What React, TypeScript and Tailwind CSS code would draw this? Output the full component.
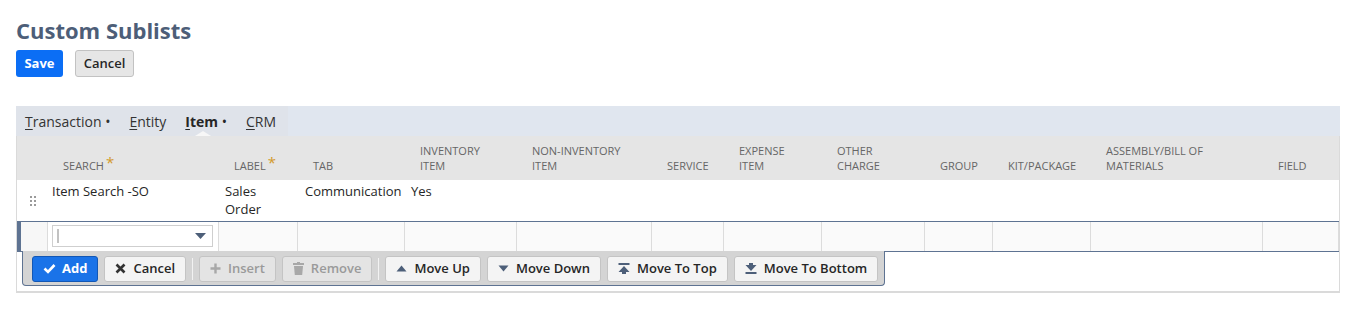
import type { ReactNode } from "react";

const COLS =
    "grid grid-cols-[31px_171px_79px_107px_112px_135px_72px_98px_103px_68px_98px_172px_1fr]";
// edit row carries a 4px left marker, so its first column is 4px narrower
const EDIT_COLS =
    "grid grid-cols-[27px_171px_79px_107px_112px_135px_72px_98px_103px_68px_98px_172px_1fr]";

const headers: { label: string[]; req?: boolean }[] = [
    { label: [""] },
    { label: ["SEARCH"], req: true },
    { label: ["LABEL"], req: true },
    { label: ["TAB"] },
    { label: ["INVENTORY", "ITEM"] },
    { label: ["NON-INVENTORY", "ITEM"] },
    { label: ["SERVICE"] },
    { label: ["EXPENSE", "ITEM"] },
    { label: ["OTHER", "CHARGE"] },
    { label: ["GROUP"] },
    { label: ["KIT/PACKAGE"] },
    { label: ["ASSEMBLY/BILL OF", "MATERIALS"] },
    { label: ["FIELD"] },
];

/* ───────── icons ───────── */
const Check = () => (
    <svg width="13" height="11" viewBox="0 0 13 11">
        <path d="M1.5 5.5 L5 9 L11.5 2" fill="none" stroke="currentColor" strokeWidth="2.6" />
    </svg>
);
const Cross = () => (
    <svg width="11" height="11" viewBox="0 0 11 11">
        <path d="M1.5 1.5 L9.5 9.5 M9.5 1.5 L1.5 9.5" stroke="currentColor" strokeWidth="2.6" />
    </svg>
);
const Plus = () => (
    <svg width="11" height="11" viewBox="0 0 11 11">
        <path d="M5.5 0.5 V10.5 M0.5 5.5 H10.5" stroke="currentColor" strokeWidth="2.4" />
    </svg>
);
const Trash = () => (
    <svg width="11" height="13" viewBox="0 0 11 13">
        <rect x="0" y="1" width="11" height="2" fill="currentColor" />
        <rect x="4" y="0" width="3" height="1.5" fill="currentColor" />
        <path d="M1 4 H10 L9.2 13 H1.8 Z" fill="currentColor" />
    </svg>
);
const Up = () => (
    <svg width="11" height="7" viewBox="0 0 11 7">
        <path d="M5.5 0.5 L10.5 6.5 H0.5 Z" fill="currentColor" />
    </svg>
);
const Down = () => (
    <svg width="11" height="7" viewBox="0 0 11 7">
        <path d="M0.5 0.5 H10.5 L5.5 6.5 Z" fill="currentColor" />
    </svg>
);
const ToTop = () => (
    <svg width="12" height="11" viewBox="0 0 12 11">
        <rect x="0.5" y="0" width="11" height="2" fill="currentColor" />
        <path d="M6 3 L11.5 9 H8 V11 H4 V9 H0.5 Z" fill="currentColor" />
    </svg>
);
const ToBottom = () => (
    <svg width="12" height="11" viewBox="0 0 12 11">
        <path d="M4 0 H8 V2 H11.5 L6 8 L0.5 2 H4 Z" fill="currentColor" />
        <rect x="0.5" y="9" width="11" height="2" fill="currentColor" />
    </svg>
);

const BarButton = ({
    icon,
    label,
    disabled,
    primary,
}: {
    icon: ReactNode;
    label: string;
    disabled?: boolean;
    primary?: boolean;
}) => (
    <button
        className={
            primary
                ? "shrink-0 whitespace-nowrap h-[26px] px-[10px] flex items-center gap-[6px] rounded-[3px] border border-[#1257b5] bg-[#1a73e8] text-white text-[13px] font-bold"
                : disabled
                  ? "shrink-0 whitespace-nowrap h-[26px] px-[10px] flex items-center gap-[7px] rounded-[3px] border border-[#c4c4c4] bg-[#e4e4e4] text-[#9a9a9a] text-[13px] font-semibold"
                  : "shrink-0 whitespace-nowrap h-[26px] px-[10px] flex items-center gap-[7px] rounded-[3px] border border-[#c4c4c4] bg-[#f4f4f4] text-[#262626] text-[13px] font-semibold"
        }
    >
        <span className={primary ? "text-white" : disabled ? "text-[#a8a8a8]" : "text-[#4d5f79]"}>
            {icon}
        </span>
        {label}
    </button>
);

const Sep = () => <span className="shrink-0 w-px h-[22px] bg-[#f2f2f2]" />;

export default function App() {
    return (
        <div className="w-full h-[322px] bg-white font-['Open_Sans',sans-serif] text-[#262626]">
            <div className="pl-4 pr-[14px]">
                {/* Page title + actions */}
                <h1 className="pt-[15px] text-[22px] leading-[30px] font-bold text-[#4d5e78]">
                    Custom Sublists
                </h1>
                <div className="mt-[5px] flex gap-3">
                    <button className="h-[27px] w-[47px] rounded-[3px] bg-[#0b6ef5] text-white text-[13px] font-bold">
                        Save
                    </button>
                    <button className="h-[27px] w-[59px] rounded-[3px] border border-[#c2c2c2] bg-[#e6e6e6] text-[#262626] text-[13px] font-semibold">
                        Cancel
                    </button>
                </div>

                {/* Tabs */}
                <div className="mt-[29px] h-[30px] flex bg-[#e0e6ef]">
                    <div className="flex items-center gap-[19px] pl-[9px] pr-[12px] bg-[#dfe3ea] text-[14px] text-[#333]">
                        <span>
                            <span className="underline underline-offset-2">T</span>ransaction{" "}
                            <span className="text-[14px]">•</span>
                        </span>
                        <span>
                            <span className="underline underline-offset-2">E</span>ntity
                        </span>
                        <span className="relative h-full flex items-center font-bold text-[#262626]">
                            <span>
                                <span className="underline underline-offset-2">I</span>tem{" "}
                                <span className="text-[14px] font-normal">•</span>
                            </span>
                            <span className="absolute bottom-0 left-[10px] w-0 h-0 border-x-[8px] border-b-[5px] border-x-transparent border-b-[#f7f7f7]" />
                        </span>
                        <span>
                            <span className="underline underline-offset-2">C</span>RM
                        </span>
                    </div>
                </div>

                {/* Sublist table */}
                <div className="border-x border-b-2 border-[#dadada] pb-[5px]">
                    <div className={`${COLS} h-[44px] bg-[#e5e5e5] text-[11px] leading-[15px] text-[#666]`}>
                        {headers.map((h, i) => (
                            <div key={i} className="flex flex-col justify-end pb-[7px] pl-[15px]">
                                {h.label.map((l, j) => (
                                    <span key={j} className="whitespace-nowrap">
                                        {l}
                                        {h.req && (
                                            <span className="ml-[2px] relative -top-[2px] text-[15px] text-[#d39a2c]">*</span>
                                        )}
                                    </span>
                                ))}
                            </div>
                        ))}
                    </div>

                    <div className={`${COLS} h-[41px] text-[13px] leading-[18px]`}>
                        <div className="flex items-center justify-center">
                            <div className="grid grid-cols-2 gap-x-[2px] gap-y-[2px]">
                                {Array.from({ length: 6 }).map((_, i) => (
                                    <span key={i} className="w-[2px] h-[2px] bg-[#9a9a9a]" />
                                ))}
                            </div>
                        </div>
                        <div className="pt-[2px] pl-[4px]">Item Search -SO</div>
                        <div className="pt-[2px] pl-[6px]">
                            Sales
                            <br />
                            Order
                        </div>
                        <div className="pt-[2px] pl-[7px]">Communication</div>
                        <div className="pt-[2px] pl-[6px]">Yes</div>
                    </div>

                    {/* Edit row */}
                    <div className={`${EDIT_COLS} h-[31px] border-y border-l-4 border-[#5e7392] bg-[#f7f7f7]`}>
                        <div className="border-r border-[#dcdcdc]" />
                        <div className="border-r border-[#dcdcdc] pl-[4px] pt-[3px] pr-[5px] bg-white">
                            <div className="h-[22px] border border-[#cfcfcf] bg-white flex items-center pl-[4px] pr-[6px] justify-between">
                                <span className="w-[2px] h-[14px] bg-[#c2c2c2]" />
                                <svg width="11" height="6" viewBox="0 0 11 6">
                                    <path d="M0 0 H11 L5.5 6 Z" fill="#4d5f79" />
                                </svg>
                            </div>
                        </div>
                        {Array.from({ length: 11 }).map((_, i) => (
                            <div key={i} className="border-r border-[#dcdcdc] bg-[#fafafa]" />
                        ))}
                    </div>

                    {/* Row actions */}
                    <div className="ml-[5px] w-[863px] h-[35px] -mt-px border-x border-b border-[#5e7392] rounded-b-[4px] bg-[#d4d4d4] flex items-center gap-[6px] pl-[9px] pt-[1px]">
                        <BarButton icon={<Check />} label="Add" primary />
                        <BarButton icon={<span className="text-[#333]"><Cross /></span>} label="Cancel" />
                        <Sep />
                        <BarButton icon={<Plus />} label="Insert" disabled />
                        <BarButton icon={<Trash />} label="Remove" disabled />
                        <Sep />
                        <BarButton icon={<Up />} label="Move Up" />
                        <BarButton icon={<Down />} label="Move Down" />
                        <BarButton icon={<ToTop />} label="Move To Top" />
                        <BarButton icon={<ToBottom />} label="Move To Bottom" />
                    </div>
                </div>
            </div>
        </div>
    );
}
